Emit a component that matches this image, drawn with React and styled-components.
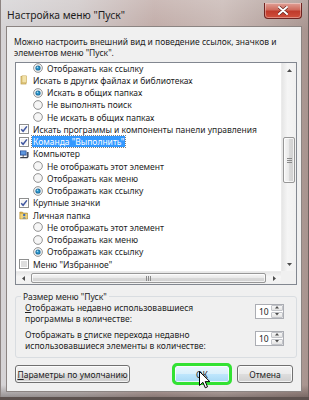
import React from 'react';
import styled, { createGlobalStyle, css } from 'styled-components';

const Global = createGlobalStyle`
  html, body { margin: 0; padding: 0; background: #8a7f7c; }
  body { font-family: "Noto Sans", "Open Sans", sans-serif; color: #1e1e1e; }
  * { box-sizing: border-box; }
`;

const Window = styled.div`
  position: relative;
  width: 309px;
  height: 400px;
  display: flex;
  flex-direction: column;
  padding: 0 7px 8px 6px;
  overflow: hidden;
  background:
    linear-gradient(180deg, rgba(255,255,255,0.18) 0%, rgba(255,255,255,0) 30px, rgba(0,0,0,0) 385px, rgba(40,30,28,0.45) 400px),
    linear-gradient(90deg, #d6d4d6 0%, #cfc8c8 25%, #c1aca8 50%, #c8b8b4 72%, #a8948f 100%);
  box-shadow: inset 0 -3px 0 #5d524f, inset 1px 0 0 #8d8482, inset -1px 0 0 #6d625f;
`;

const TitleBar = styled.div`
  height: 26px;
  display: flex;
  align-items: flex-start;
  flex-shrink: 0;
`;

const Title = styled.div`
  margin-top: 8px;
  padding-left: 1px;
  font-size: 10.3px;
  line-height: 14px;
  color: #1d1d1d;
  white-space: nowrap;
`;

const CloseButton = styled.div`
  margin-left: auto;
  margin-top: 3px;
  width: 38px;
  height: 16px;
  display: flex;
  align-items: center;
  justify-content: center;
  border: 1px solid #6e2320;
  border-top: none;
  border-radius: 0 0 4px 4px;
  background: linear-gradient(180deg, #e0a197 0%, #cf6b5d 45%, #c03a2b 55%, #d0503c 100%);
  box-shadow: inset 0 0 0 1px rgba(255,255,255,0.35);
`;

const Client = styled.div`
  flex: 1;
  display: flex;
  flex-direction: column;
  background: #f0f0f0;
  border: 1px solid #8b8482;
  padding: 9px 4px 8px 8px;
`;

const Description = styled.div`
  font-size: 8.5px;
  line-height: 11px;
  margin-left: -1px;
`;

const ListBox = styled.div`
  margin-top: 4px;
  height: 223px;
  border: 1px solid #828790;
  background: #fff;
  display: grid;
  grid-template-columns: 1fr 15px;
  grid-template-rows: 1fr 13px;
`;

const Items = styled.div`
  overflow: hidden;
  padding-top: 0;
`;

const ItemsInner = styled.div`
  margin-top: -1px;
`;

const Row = styled.div`
  height: 12.25px;
  display: flex;
  align-items: center;
  gap: 3px;
  padding-left: ${p => (p.$level ? 17 : 3)}px;
  font-size: 8.5px;
  white-space: nowrap;
`;

const RowText = styled.span`
  line-height: 11px;
  padding: 0 1px;
  ${p => p.$selected && css`
    background: #3399ff;
    color: #fff;
    outline: 1px dotted rgba(0,0,0,0.5);
  `}
`;

const IconBox = styled.span`
  width: 10px;
  height: 10px;
  display: inline-flex;
  flex-shrink: 0;
`;

const VScroll = styled.div`
  display: flex;
  flex-direction: column;
  background: linear-gradient(90deg, #e6e6e6, #f5f5f5 40%, #f0f0f0);
  border-left: 1px solid #ebebeb;
`;

const HScroll = styled.div`
  display: flex;
  background: linear-gradient(180deg, #e6e6e6, #f5f5f5 40%, #f0f0f0);
  border-top: 1px solid #ebebeb;
`;

const Corner = styled.div`
  background: #f0f0f0;
`;

const ArrowBtn = styled.div`
  flex-shrink: 0;
  width: ${p => (p.$horizontal ? '14px' : '100%')};
  height: ${p => (p.$horizontal ? '100%' : '14px')};
  display: flex;
  align-items: center;
  justify-content: center;
`;

const Track = styled.div`
  flex: 1;
  display: flex;
  flex-direction: ${p => (p.$horizontal ? 'row' : 'column')};
  padding: ${p => (p.$horizontal ? '0' : '0 1px')};
`;

const Thumb = styled.div`
  border: 1px solid #979797;
  border-radius: 2px;
  background: ${p => (p.$horizontal
    ? 'linear-gradient(180deg, #f6f6f6 0%, #e9e9e9 50%, #d9d9d9 51%, #d0d0d0 100%)'
    : 'linear-gradient(90deg, #f6f6f6 0%, #e9e9e9 50%, #d9d9d9 51%, #d0d0d0 100%)')};
  box-shadow: inset 0 0 0 1px rgba(255,255,255,0.7);
  display: flex;
  align-items: center;
  justify-content: center;
  ${p => (p.$horizontal
    ? css`flex: 1; margin: 1px 1px;`
    : css`margin-top: 60px; height: 46px;`)}
`;

const GripV = styled.div`
  display: flex;
  flex-direction: column;
  gap: 1px;
  & > span { display: block; width: 5px; height: 1px; background: #8a8a8a; }
`;

const GripH = styled.div`
  display: flex;
  gap: 1px;
  & > span { display: block; width: 1px; height: 5px; background: #8a8a8a; }
`;

const Group = styled.fieldset`
  margin: 6px 0 0 0;
  padding: 0 12px 6px 9px;
  border: 1px solid #d9dde1;
  border-radius: 3px;
  min-width: 0;
`;

const Legend = styled.legend`
  margin-left: -4px;
  padding: 0 2px;
  font-size: 8.5px;
  line-height: 11px;
`;

const SettingRow = styled.div`
  display: grid;
  grid-template-columns: 1fr auto;
  align-items: start;
  margin-top: ${p => p.$gap || 0}px;
`;

const SettingLabel = styled.div`
  font-size: 8.5px;
  line-height: 11px;
`;

const U = styled.span`
  text-decoration: underline;
`;

const Spinner = styled.div`
  margin-top: 1.5px;
  width: 29px;
  height: 15px;
  display: flex;
  border: 1px solid #abadb3;
  background: #fff;
`;

const SpinValue = styled.div`
  flex: 1;
  font-size: 8.5px;
  line-height: 13px;
  padding-left: 3px;
`;

const SpinButtons = styled.div`
  width: 12px;
  display: flex;
  flex-direction: column;
  gap: 1px;
  padding: 0;
`;

const SpinBtn = styled.div`
  flex: 1;
  display: flex;
  align-items: center;
  justify-content: center;
  border: 1px solid #c2c4c9;
  border-radius: 1px;
  background: linear-gradient(180deg, #f7f7f7, #e3e3e3);
`;

const ButtonRow = styled.div`
  margin-top: auto;
  display: flex;
  align-items: center;
  padding-right: 4px;
`;

const Button = styled.div`
  position: relative;
  width: ${p => p.$width}px;
  height: 18px;
  margin-left: ${p => p.$ml || 0};
  display: flex;
  align-items: center;
  justify-content: center;
  font-size: 8.5px;
  border: 1px solid #707070;
  border-radius: 3px;
  background: linear-gradient(180deg, #f2f2f2 0%, #ebebeb 48%, #dddddd 52%, #cfcfcf 100%);
  box-shadow: inset 0 0 0 1px rgba(255,255,255,0.75);
  white-space: nowrap;
  ${p => p.$hover && css`
    border-color: #3c7fb1;
    background: linear-gradient(180deg, #eaf6fd 0%, #d9f0fc 48%, #bee6fd 52%, #a7d9f5 100%);
    outline: 3px solid #33e233;
    outline-offset: -1px;
  `}
`;

const Cursor = styled.svg`
  position: absolute;
  left: 24px;
  top: 5px;
`;

/* ---------- icons ---------- */

const Radio = ({ checked }) => (
  <IconBox>
    <svg width="10" height="10" viewBox="0 0 10 10">
      <circle cx="5" cy="5" r="4.4" fill="#e9e9e9" stroke="#8e8f8f" strokeWidth="0.9" />
      <circle cx="5" cy="5" r="3.3" fill="#f6f6f6" />
      {checked && (
        <>
          <circle cx="5" cy="5" r="2.6" fill="#1d6f9f" />
          <circle cx="5" cy="5" r="1.6" fill="#2f9bd0" />
          <circle cx="4.4" cy="4.3" r="0.8" fill="#aee3f8" />
        </>
      )}
    </svg>
  </IconBox>
);

const Check = ({ checked }) => (
  <IconBox>
    <svg width="10" height="10" viewBox="0 0 10 10">
      <rect x="0.5" y="0.5" width="9" height="9" fill="#fff" stroke="#8e8f8f" />
      <rect x="2" y="2" width="6" height="6" fill={checked ? '#f4f4f4' : '#dedede'} />
      {checked && (
        <path d="M2.2 5.2 L4.1 7.3 L7.9 2.4" fill="none" stroke="#3f56a0" strokeWidth="1.5" />
      )}
    </svg>
  </IconBox>
);

const FilesIcon = () => (
  <IconBox>
    <svg width="10" height="10" viewBox="0 0 10 10">
      <rect x="2" y="1.5" width="5" height="7.5" fill="#e7cf82" stroke="#b9994a" strokeWidth="0.7" />
      <rect x="3" y="0.8" width="4.5" height="7" fill="#f2e2a8" stroke="#c7a85a" strokeWidth="0.5" />
    </svg>
  </IconBox>
);

const ComputerIcon = () => (
  <IconBox>
    <svg width="10" height="10" viewBox="0 0 10 10">
      <rect x="1" y="1.5" width="6.5" height="5" fill="#2a4f96" />
      <rect x="1.8" y="2.2" width="4.9" height="3.4" fill="#5d96de" />
      <rect x="3.5" y="6.5" width="1.5" height="1" fill="#333" />
      <path d="M1.5 8 L9.5 8 L8.5 9.3 L0.8 9.3 Z" fill="#3b3f4a" />
      <rect x="7.8" y="3" width="1.8" height="5" fill="#4a5060" />
    </svg>
  </IconBox>
);

const PersonalIcon = () => (
  <IconBox>
    <svg width="10" height="10" viewBox="0 0 10 10">
      <path d="M0.8 2 L3.5 2 L4.3 3 L8.5 3 L8.5 9 L0.8 9 Z" fill="#d9b24d" stroke="#a8852e" strokeWidth="0.5" />
      <rect x="1.4" y="4" width="6.6" height="4.6" fill="#efd27a" />
      <circle cx="5.2" cy="5" r="1.2" fill="#3d6fb8" />
      <path d="M3.4 8.6 Q5.2 5.8 7 8.6 Z" fill="#3d6fb8" />
    </svg>
  </IconBox>
);

const MusicIcon = () => (
  <IconBox>
    <svg width="10" height="10" viewBox="0 0 10 10">
      <path d="M3 1 L8 0.2 L8 6.5" fill="none" stroke="#3b72c0" strokeWidth="1" />
      <path d="M3 1 L3 7.5" fill="none" stroke="#3b72c0" strokeWidth="1" />
      <circle cx="2.2" cy="7.8" r="1.4" fill="#3b72c0" />
      <circle cx="7.2" cy="6.8" r="1.4" fill="#3b72c0" />
    </svg>
  </IconBox>
);

const Tri = ({ dir, size = 5, color = '#4d4d4d' }) => {
  const paths = {
    up: `M0 ${size * 0.6} L${size / 2} 0 L${size} ${size * 0.6} Z`,
    down: `M0 0 L${size / 2} ${size * 0.6} L${size} 0 Z`,
    left: `M${size * 0.6} 0 L0 ${size / 2} L${size * 0.6} ${size} Z`,
    right: `M0 0 L${size * 0.6} ${size / 2} L0 ${size} Z`,
  };
  const horizontal = dir === 'left' || dir === 'right';
  return (
    <svg width={horizontal ? size * 0.6 : size} height={horizontal ? size : size * 0.6}>
      <path d={paths[dir]} fill={color} />
    </svg>
  );
};

const rows = [
  { level: 1, icon: 'radio', checked: true, text: 'Отображать как ссылку' },
  { level: 0, icon: 'files', text: 'Искать в других файлах и библиотеках' },
  { level: 1, icon: 'radio', checked: true, text: 'Искать в общих папках' },
  { level: 1, icon: 'radio', text: 'Не выполнять поиск' },
  { level: 1, icon: 'radio', text: 'Не искать в общих папках' },
  { level: 0, icon: 'check', checked: true, text: 'Искать программы и компоненты панели управления' },
  { level: 0, icon: 'check', checked: true, text: 'Команда "Выполнить"', selected: true },
  { level: 0, icon: 'computer', text: 'Компьютер' },
  { level: 1, icon: 'radio', text: 'Не отображать этот элемент' },
  { level: 1, icon: 'radio', text: 'Отображать как меню' },
  { level: 1, icon: 'radio', checked: true, text: 'Отображать как ссылку' },
  { level: 0, icon: 'check', checked: true, text: 'Крупные значки' },
  { level: 0, icon: 'personal', text: 'Личная папка' },
  { level: 1, icon: 'radio', text: 'Не отображать этот элемент' },
  { level: 1, icon: 'radio', text: 'Отображать как меню' },
  { level: 1, icon: 'radio', checked: true, text: 'Отображать как ссылку' },
  { level: 0, icon: 'check', text: 'Меню "Избранное"' },
  { level: 0, icon: 'music', text: 'Музыка' },
];

const renderIcon = (r) => {
  switch (r.icon) {
    case 'radio': return <Radio checked={r.checked} />;
    case 'check': return <Check checked={r.checked} />;
    case 'files': return <FilesIcon />;
    case 'computer': return <ComputerIcon />;
    case 'personal': return <PersonalIcon />;
    case 'music': return <MusicIcon />;
    default: return null;
  }
};

export default function App() {
  return (
    <>
      <Global />
      <Window>
        <TitleBar>
          <Title>Настройка меню "Пуск"</Title>
          <CloseButton>
            <svg width="10" height="9" viewBox="0 0 10 9">
              <path d="M1 1 L9 8 M9 1 L1 8" stroke="#5a1a14" strokeWidth="3.2" strokeLinecap="round" />
              <path d="M1 1 L9 8 M9 1 L1 8" stroke="#fff" strokeWidth="2" strokeLinecap="round" />
            </svg>
          </CloseButton>
        </TitleBar>
        <Client>
          <Description>
            Можно настроить внешний вид и поведение ссылок, значков и<br />
            элементов меню "Пуск".
          </Description>
          <ListBox>
            <Items>
              <ItemsInner>
                {rows.map((r, i) => (
                  <Row key={i} $level={r.level}>
                    {renderIcon(r)}
                    <RowText $selected={r.selected}>{r.text}</RowText>
                  </Row>
                ))}
              </ItemsInner>
            </Items>
            <VScroll>
              <ArrowBtn><Tri dir="up" /></ArrowBtn>
              <Track>
                <Thumb>
                  <GripV><span /><span /><span /></GripV>
                </Thumb>
              </Track>
              <ArrowBtn><Tri dir="down" /></ArrowBtn>
            </VScroll>
            <HScroll>
              <ArrowBtn $horizontal><Tri dir="left" /></ArrowBtn>
              <Track $horizontal>
                <Thumb $horizontal>
                  <GripH><span /><span /><span /></GripH>
                </Thumb>
              </Track>
              <ArrowBtn $horizontal><Tri dir="right" /></ArrowBtn>
            </HScroll>
            <Corner />
          </ListBox>
          <Group>
            <Legend>Размер меню "Пуск"</Legend>
            <SettingRow>
              <SettingLabel>
                <U>О</U>тображать недавно использовавшиеся<br />
                программы в количестве:
              </SettingLabel>
              <Spinner>
                <SpinValue>10</SpinValue>
                <SpinButtons>
                  <SpinBtn><Tri dir="up" size={4} /></SpinBtn>
                  <SpinBtn><Tri dir="down" size={4} /></SpinBtn>
                </SpinButtons>
              </Spinner>
            </SettingRow>
            <SettingRow $gap={5}>
              <SettingLabel>
                Отображать в <U>с</U>писке перехода недавно<br />
                использовавшиеся элементы в количестве:
              </SettingLabel>
              <Spinner>
                <SpinValue>10</SpinValue>
                <SpinButtons>
                  <SpinBtn><Tri dir="up" size={4} /></SpinBtn>
                  <SpinBtn><Tri dir="down" size={4} /></SpinBtn>
                </SpinButtons>
              </Spinner>
            </SettingRow>
          </Group>
          <ButtonRow>
            <Button $width={115}><span><U>П</U>араметры по умолчанию</span></Button>
            <Button $width={56} $ml="auto" $hover>
              ОК
              <Cursor width="12" height="18" viewBox="0 0 12 18">
                <path d="M0.5 0.5 L0.5 14.5 L3.9 11.3 L6.3 16.8 L8.5 15.8 L6.2 10.6 L10.8 10.6 Z" fill="#fff" stroke="#000" strokeWidth="1" strokeLinejoin="round" />
              </Cursor>
            </Button>
            <Button $width={56} $ml="7px">Отмена</Button>
          </ButtonRow>
        </Client>
      </Window>
    </>
  );
}
